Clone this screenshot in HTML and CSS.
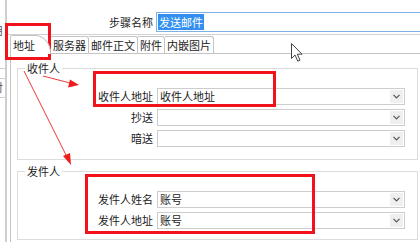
FILE: index.html
```html
<!DOCTYPE html>
<html lang="zh-CN">
  <head>
    <meta charset="UTF-8" />
    <meta name="viewport" content="width=device-width, initial-scale=1.0" />
    <title>发送邮件 - 步骤设置</title>
    <link rel="stylesheet" href="styles.css">
  </head>

  <body>
    <div class="window">
      <div class="side">
        <div class="side-char first">用</div>
        <div class="side-line"></div>
        <div class="side-line tight"></div>
        <div class="side-char">对</div>
        <div class="side-line tight"></div>
        <div class="side-char">-</div>
      </div>

      <div class="main">
        <div class="step-row">
          <label class="step-label">步骤名称</label>
          <div class="step-input"><span class="selected">发送邮件</span></div>
        </div>

        <div class="tabs">
          <span class="tab active">地址</span>
          <span class="tab">服务器</span>
          <span class="tab">邮件正文</span>
          <span class="tab">附件</span>
          <span class="tab">内嵌图片</span>
        </div>

        <div class="tab-panel">
          <div class="group">
            <div class="group-title">收件人</div>
            <div class="fields">
              <label>收件人地址</label>
              <div class="combo">
                <span class="value">收件人地址</span>
                <span class="drop"><svg width="7" height="5" viewBox="0 0 7 5"><polyline points="0.5,0.8 3.5,3.8 6.5,0.8" fill="none" stroke="#555" stroke-width="1.2"/></svg></span>
              </div>
              <label>抄送</label>
              <div class="combo">
                <span class="value"></span>
                <span class="drop"><svg width="7" height="5" viewBox="0 0 7 5"><polyline points="0.5,0.8 3.5,3.8 6.5,0.8" fill="none" stroke="#555" stroke-width="1.2"/></svg></span>
              </div>
              <label>暗送</label>
              <div class="combo">
                <span class="value"></span>
                <span class="drop"><svg width="7" height="5" viewBox="0 0 7 5"><polyline points="0.5,0.8 3.5,3.8 6.5,0.8" fill="none" stroke="#555" stroke-width="1.2"/></svg></span>
              </div>
            </div>
          </div>

          <div class="group sender">
            <div class="group-title">发件人</div>
            <div class="fields">
              <label>发件人姓名</label>
              <div class="combo">
                <span class="value">账号</span>
                <span class="drop"><svg width="7" height="5" viewBox="0 0 7 5"><polyline points="0.5,0.8 3.5,3.8 6.5,0.8" fill="none" stroke="#555" stroke-width="1.2"/></svg></span>
              </div>
              <label>发件人地址</label>
              <div class="combo">
                <span class="value">账号</span>
                <span class="drop"><svg width="7" height="5" viewBox="0 0 7 5"><polyline points="0.5,0.8 3.5,3.8 6.5,0.8" fill="none" stroke="#555" stroke-width="1.2"/></svg></span>
              </div>
            </div>
          </div>
        </div>
      </div>
    </div>

    <!-- 红色标注 -->
    <svg class="marks" width="420" height="242" viewBox="0 0 420 242">
      <g fill="none" stroke="#f2121c" stroke-width="3">
        <rect x="6.5" y="24.5" width="43" height="34" />
        <rect x="94.5" y="72.5" width="180" height="33" />
        <rect x="86.5" y="175.5" width="227" height="57" />
      </g>
      <g stroke="#e83a3a" stroke-width="1">
        <line x1="43" y1="76" x2="70" y2="83" />
        <line x1="24" y1="71" x2="66" y2="155" />
      </g>
      <g fill="#ee1c1c">
        <polygon points="79,85 68,87.5 70,79.5" />
        <polygon points="71,165 63,156 70,153" />
      </g>
    </svg>

    <svg class="cursor" width="13" height="20" viewBox="0 0 13 20">
      <path d="M0.5 0.5 L0.5 15.5 L4 12 L6.8 18.2 L9 17.2 L6.3 11.2 L11 11.2 Z" fill="#fff" stroke="#444" stroke-width="1" />
    </svg>
  </body>
</html>
```

FILE: styles.css
```css
body {
  margin: 0;
  width: 420px;
  height: 242px;
  overflow: hidden;
  background-color: #fff;
  font-family: "Noto Sans CJK SC", "Microsoft YaHei", sans-serif;
  font-size: 11px;
  color: #222;
}

.window {
  display: flex;
  height: 242px;
}

/* 左侧被遮住的面板 */
.side {
  width: 5px;
  flex: none;
  overflow: hidden;
  border-right: 2px solid #cfcfcf;
  color: #555;
}

.side-char {
  margin-left: -8px;
  line-height: 14px;
  margin-bottom: 3px;
}

.side-char.first {
  margin-top: 23px;
  margin-bottom: 31px;
}

.side-line {
  height: 1px;
  background-color: #cfcfcf;
  margin-bottom: 9px;
}

.side-line.tight {
  margin-bottom: 1px;
}

.main {
  flex: 1;
  overflow: hidden;
}

.step-row {
  display: flex;
  align-items: flex-start;
  height: 35px;
  padding-top: 12px;
  box-sizing: border-box;
  border-bottom: 1px solid #d2d2d2;
}

.step-label {
  width: 146px;
  flex: none;
  text-align: right;
  line-height: 20px;
}

.step-input {
  margin-left: 3px;
  flex: 1;
  margin-right: -10px;
  height: 20px;
  box-sizing: border-box;
  border: 1px solid #7eb2e4;
  padding: 1px 1px;
}

.selected {
  display: inline-block;
  background-color: #3390f0;
  color: #fff;
  line-height: 16px;
  padding: 0 1px;
}

/* 选项卡 */
.tabs {
  display: flex;
  align-items: flex-end;
  height: 18px;
  padding-left: 3px;
}

.tab {
  line-height: 16px;
  padding: 0 2px;
  border: 1px solid #c4c4c4;
  border-bottom: none;
  border-left: none;
  border-top-right-radius: 3px;
  background-color: #fff;
}

.tab.active {
  position: relative;
  z-index: 1;
  line-height: 18px;
  padding: 0 15px 0 2px;
  margin-bottom: -1px;
  border-left: 1px solid #c4c4c4;
  border-top-left-radius: 2px;
  border-top-right-radius: 16px 18px;
}

.tab-panel {
  margin-left: 3px;
  border-top: 1px solid #c4c4c4;
  border-left: 1px solid #c4c4c4;
  padding: 14px 0 0 6px;
  height: 200px;
}

.group {
  width: 401px;
  box-sizing: border-box;
  border: 1px solid #dcdcdc;
}

.group.sender {
  margin-top: 11px;
}

.group-title {
  width: max-content;
  margin: -8px 0 0 7px;
  padding: 0 2px;
  line-height: 14px;
  background-color: #fff;
}

.fields {
  display: grid;
  grid-template-columns: 135px 1fr;
  column-gap: 4px;
  row-gap: 4px;
  padding: 13px 12px 12px 0;
}

.sender .fields {
  padding-bottom: 10px;
}

.fields label {
  text-align: right;
  line-height: 17px;
}

.combo {
  display: flex;
  height: 17px;
  box-sizing: border-box;
  border: 1px solid #cdcdcd;
  background-color: #fff;
}

.combo .value {
  flex: 1;
  padding-left: 2px;
  line-height: 15px;
}

.combo .drop {
  width: 13px;
  margin: 1px;
  background-color: #efefef;
  display: flex;
  align-items: center;
  justify-content: center;
}

.marks {
  position: absolute;
  left: 0;
  top: 0;
}

.cursor {
  position: absolute;
  left: 291px;
  top: 43px;
}
```
